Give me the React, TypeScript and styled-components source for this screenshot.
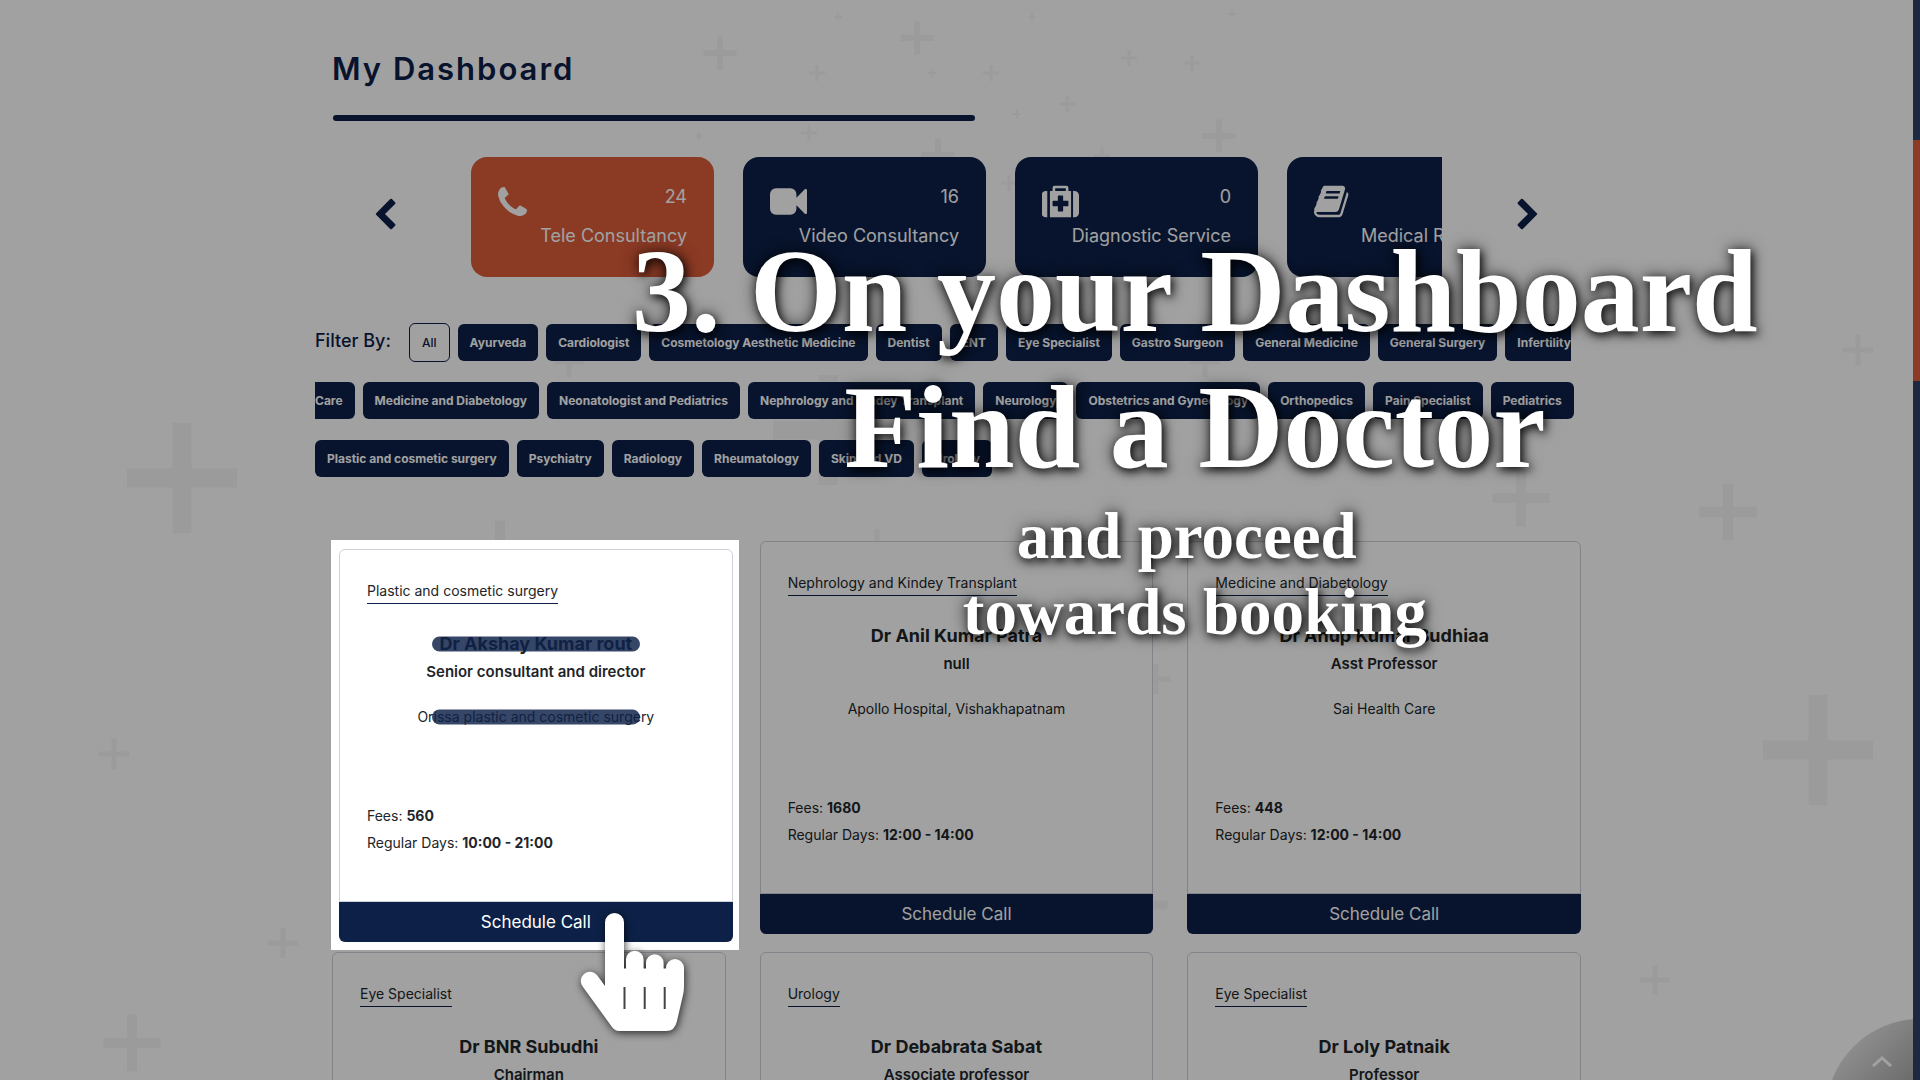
import React from "react";
import styled, { createGlobalStyle, css } from "styled-components";

const navy = "#0d2148";
const orange = "#dc5c39";
const ink = "#212529";

const GlobalStyle = createGlobalStyle`
  *, *::before, *::after { box-sizing: border-box; }
  body {
    margin: 0;
    background: #fff;
    color: ${ink};
    font-family: Inter, "Noto Sans", sans-serif;
    font-size: 14px;
  }
  h1, h2, h3, p { margin: 0; }
  button { font-family: inherit; border: 0; cursor: pointer; }
`;

const Shell = styled.div`
  position: relative;
  display: flex;
  height: 100vh;
  overflow: hidden;
`;

const Content = styled.main`
  position: relative;
  flex: 1;
  min-width: 0;
  overflow: hidden;
`;

const ScrollTrack = styled.div`
  flex: 0 0 7px;
  padding-top: 140px;
  background: #2e4068;
`;

const ScrollThumb = styled.div`
  height: 241px;
  background: ${orange};
`;

const Backdrop = styled.svg`
  position: absolute;
  inset: 0 auto auto 0;
  width: 1920px;
  height: 1080px;
  fill: #f6f6f6;
`;

const Dim = styled.div`
  position: absolute;
  inset: 0;
  z-index: 1;
  background: rgba(0, 0, 0, 0.37);
  pointer-events: none;
`;

const Container = styled.div`
  position: relative;
  width: min(1249px, 92%);
  margin: 0 auto;
  padding-top: 49px;
`;

const Title = styled.h1`
  color: ${navy};
  font-size: 31px;
  font-weight: 600;
  line-height: 40px;
  letter-spacing: 2px;
`;

const TitleBar = styled.div`
  width: 642px;
  max-width: 100%;
  height: 6px;
  margin: 26px 0 36px 1px;
  border-radius: 3px;
  background: ${navy};
`;

const Carousel = styled.section`
  display: flex;
  align-items: center;
  justify-content: space-between;
  padding: 0 36px;
`;

const ArrowButton = styled.button`
  display: flex;
  padding: 0 0 6px;
  background: transparent;
  color: ${navy};
`;

const Viewport = styled.div`
  display: flex;
  flex: 0 1 971px;
  gap: 29px;
  overflow: hidden;
`;

const Tile = styled.button<{ $active?: boolean }>`
  display: flex;
  flex: 0 0 243px;
  justify-content: space-between;
  height: 120px;
  padding: 26px 27px;
  border-radius: 16px;
  background: ${(p) => (p.$active ? orange : navy)};
  color: #fff;
  font-size: 18px;
  white-space: nowrap;
`;

const TileIcon = styled.span`
  display: flex;
  align-items: center;
  width: 37px;
  height: 37px;
`;

const TileText = styled.span`
  display: flex;
  flex: 1;
  flex-direction: column;
  align-items: flex-end;
  width: 0;
  line-height: 39px;
  margin-top: -6px;
`;

const Filters = styled.nav`
  margin: 37px -17px 53px;
  font-size: 12px;
  line-height: 58px;
  white-space: nowrap;
`;

const FilterLabel = styled.span`
  display: inline-block;
  width: 94px;
  color: ${navy};
  font-size: 18px;
  font-weight: 500;
  line-height: 24px;
`;

const Pill = styled.a<{ $outlined?: boolean; $cut?: "left" | "right" }>`
  margin-right: 8px;
  padding: 11px 12px;
  border-radius: 6px;
  background: ${navy};
  color: #fff;
  font-weight: 700;
  text-decoration: none;
  ${(p) =>
    p.$outlined &&
    css`
      border: 1px solid ${navy};
      background: transparent;
      color: ${navy};
      font-weight: 500;
    `}
  ${(p) =>
    p.$cut === "right" &&
    css`
      margin-right: 0;
      padding-right: 0;
      border-radius: 6px 0 0 6px;
    `}
  ${(p) =>
    p.$cut === "left" &&
    css`
      padding-left: 0;
      border-radius: 0 6px 6px 0;
    `}
`;

const Doctors = styled.section`
  display: grid;
  grid-template-columns: repeat(3, minmax(0, 1fr));
  gap: 18px 34px;
`;

const Cell = styled.div`
  position: relative;
  min-width: 0;
`;

const Spotlight = styled.div`
  position: absolute;
  top: -1px;
  left: -1px;
  z-index: 2;
  width: calc(100% + 14px);
  padding: 9px 6px 8px 8px;
  background: #fff;
`;

const Card = styled.article`
  display: flex;
  flex-direction: column;
  min-height: 393px;
  border-radius: 6px;
  background: #fff;
`;

const CardBody = styled.div`
  display: flex;
  flex: 1;
  flex-direction: column;
  align-items: center;
  padding: 31px 27px 45px;
  border: 1px solid #cfd1db;
  border-radius: 6px 6px 0 0;
  line-height: 20px;
`;

const Speciality = styled.p`
  align-self: flex-start;
  padding-bottom: 2px;
  border-bottom: 1px solid ${navy};
`;

const DoctorName = styled.h2`
  margin-top: 28px;
  font-size: 18px;
  font-weight: 700;
  line-height: 24px;
`;

const Position = styled.h3`
  margin-top: 6px;
  font-size: 15px;
  font-weight: 600;
  line-height: 20px;
`;

const Clinic = styled.p`
  margin-top: 25px;
`;

const Covered = styled.span`
  position: relative;
`;

const Redaction = styled.span`
  position: absolute;
  top: 50%;
  left: 50%;
  width: 208px;
  height: 15px;
  border-radius: 8px;
  background: rgba(13, 33, 72, 0.83);
  transform: translate(-50%, -50%);
`;

const Facts = styled.div`
  align-self: stretch;
  margin-top: auto;
  line-height: 27px;
`;

const Schedule = styled.button`
  height: 40px;
  border-radius: 0 0 6px 6px;
  background: ${navy};
  color: #fff;
  font-size: 17px;
`;

const Hand = styled.svg`
  position: absolute;
  top: 373px;
  left: 250px;
  overflow: visible;
  filter: drop-shadow(1px 2px 4px rgba(0, 0, 0, 0.75));
`;

const ToTop = styled.button`
  position: absolute;
  right: -101px;
  bottom: -127px;
  display: flex;
  width: 188px;
  height: 188px;
  padding: 37px 0 0 46px;
  border-radius: 50%;
  background: linear-gradient(135deg, #e8e8e8 10%, #808080 60%);
  color: #fff;
`;

const Caption = styled.div`
  position: absolute;
  top: 224px;
  left: 632px;
  z-index: 3;
  color: #fff;
  font-family: "Liberation Serif", "Times New Roman", serif;
  font-weight: 700;
  text-align: center;
  white-space: nowrap;
  text-shadow: 2px 3px 9px rgba(0, 0, 0, 0.8), 0 0 16px rgba(0, 0, 0, 0.7);
  pointer-events: none;
`;

const CaptionTitle = styled.p`
  font-size: 118px;
  line-height: 136px;
`;

const CaptionNote = styled.p`
  margin-top: 2px;
  font-size: 65px;
  line-height: 76px;
`;

/* centre x, centre y, arm length, arm thickness */
const crosses: number[][] = [
  [182, 478, 110, 19], [114, 754, 30, 5], [283, 943, 30, 5], [132, 1043, 57, 10],
  [1858, 350, 30, 5], [1728, 512, 57, 10], [1818, 750, 110, 19], [1655, 980, 30, 5],
  [720, 53, 33, 6], [917, 38, 33, 6], [817, 73, 16, 3], [991, 73, 16, 3],
  [1129, 58, 16, 3], [1192, 63, 16, 3], [1067, 104, 16, 3], [838, 17, 8, 2],
  [1032, 17, 8, 2], [1232, 14, 8, 2], [932, 73, 8, 2], [1017, 114, 8, 2],
  [699, 136, 8, 2], [809, 133, 16, 3], [938, 155, 33, 6], [1102, 156, 16, 3],
  [1219, 136, 33, 6], [1205, 362, 30, 5], [569, 362, 30, 5], [828, 430, 110, 19],
  [1521, 498, 57, 10], [500, 549, 57, 10], [877, 544, 30, 5], [1156, 679, 30, 5],
  [1139, 905, 57, 9], [1009, 183, 16, 3],
];

const icons = {
  phone: {
    box: "0 0 1408 1408",
    width: 29,
    height: 29,
    d: "M1408 1112q0 27-10 70.5t-21 68.5q-21 50-122 106-94 51-186 51-27 0-53-3.5t-57-12.5-47-14.5-55.5-20.5-49-18q-98-35-175-83-127-79-264-216t-216-264q-48-77-83-175-3-9-18-49t-20.5-55.5-14.5-47-12.5-57-3.5-53q0-92 51-186 56-101 106-122 25-11 68.5-21t70.5-10q14 0 21 3 18 6 53 76 11 19 30 54t35 63.5 31 53.5q3 4 17.5 25t21.5 35.5 7 28.5q0 20-28.5 50t-62 55-62 53-28.5 46q0 9 5 22.5t8.5 20.5 14 24 11.5 19q76 137 174 235t235 174q2 1 19 11.5t24 14 20.5 8.5 22.5 5q18 0 46-28.5t53-62 55-62 50-28.5q14 0 28.5 7t35.5 21.5 25 17.5q25 15 53.5 31t63.5 35 54 30q70 35 76 53 3 7 3 21z",
  },
  video: {
    box: "0 0 1792 1792",
    width: 37,
    height: 37,
    d: "M1792 352v1088q0 42-39 59-13 5-25 5-27 0-45-19l-403-403v166q0 119-84.5 203.5t-203.5 84.5h-704q-119 0-203.5-84.5t-84.5-203.5v-704q0-119 84.5-203.5t203.5-84.5h704q119 0 203.5 84.5t84.5 203.5v165l403-402q18-19 45-19 12 0 25 5 39 17 39 59z",
  },
  medkit: {
    box: "0 0 1792 1792",
    width: 37,
    height: 37,
    d: "M1280 1088v-192q0-14-9-23t-23-9h-224v-224q0-14-9-23t-23-9h-192q-14 0-23 9t-9 23v224h-224q-14 0-23 9t-9 23v192q0 14 9 23t23 9h224v224q0 14 9 23t23 9h192q14 0 23-9t9-23v-224h224q14 0 23-9t9-23zm-640-704h512v-128h-512v128zm-384 0v1280h-64q-92 0-158-66t-66-158v-832q0-92 66-158t158-66h64zm1152 0v1280h-1024v-1280h128v-160q0-40 28-68t68-28h576q40 0 68 28t28 68v160h128zm384 224v832q0 92-66 158t-158 66h-64v-1280h64q92 0 158 66t66 158z",
  },
  book: {
    box: "64 0 1792 1792",
    width: 37,
    height: 37,
    d: "M1703 478q40 57 18 129l-275 906q-19 64-76.5 107.5t-122.5 43.5h-923q-77 0-148.5-53.5t-99.5-131.5q-24-67-2-127 0-4 3-27t4-37q1-8-3-21.5t-3-19.5q2-11 8-21t16.5-23.5 16.5-23.5q23-38 45-91.5t30-91.5q3-10 .5-30t-.5-28q3-11 17-28t17-23q21-36 42-92t25-90q1-9-2.5-32t.5-28q4-13 22-30.5t22-22.5q19-26 42.5-84.5t27.5-96.5q1-8-3-25.5t-2-26.5q2-8 9-18t18-23 17-21q8-12 16.5-30.5t15-35 16-36 19.5-32 26.5-23.5 36-11.5 47.5 5.5l-1 3q38-9 51-9h761q74 0 114 56t18 130l-274 906q-36 119-71.5 153.5t-128.5 34.5h-869q-27 0-38 15-11 16-1 43 24 70 144 70h923q29 0 56-15.5t35-41.5l300-987q7-22 5-57 38 15 59 43zm-1064 2q-4 13 2 22.5t20 9.5h608q13 0 25.5-9.5t16.5-22.5l21-64q4-13-2-22.5t-20-9.5h-608q-13 0-25.5 9.5t-16.5 22.5zm-83 256q-4 13 2 22.5t20 9.5h608q13 0 25.5-9.5t16.5-22.5l21-64q4-13-2-22.5t-20-9.5h-608q-13 0-25.5 9.5t-16.5 22.5z",
  },
};

const chevron =
  "M1427 301l-531 531 531 531q19 19 19 45t-19 45l-166 166q-19 19-45 19t-45-19l-742-742q-19-19-19-45t19-45l742-742q19-19 45-19t45 19l166 166q19 19 19 45t-19 45z";

type IconName = keyof typeof icons;

function Icon({ name }: { name: IconName }) {
  const icon = icons[name];
  return (
    <svg width={icon.width} height={icon.height} viewBox={icon.box} fill="currentColor" aria-hidden="true">
      <path d={icon.d} />
    </svg>
  );
}

function Chevron({ flipped }: { flipped?: boolean }) {
  return (
    <svg width="34" height="34" viewBox="0 0 1792 1792" fill="currentColor" aria-hidden="true">
      <path d={chevron} transform={flipped ? "matrix(-1 0 0 1 1792 64)" : "translate(0 64)"} />
    </svg>
  );
}

const services: { icon: IconName; count?: number; label: string }[] = [
  { icon: "phone", count: 24, label: "Tele Consultancy" },
  { icon: "video", count: 16, label: "Video Consultancy" },
  { icon: "medkit", count: 0, label: "Diagnostic Service" },
  { icon: "book", label: "Medical Records" },
];

const firstRow = [
  "Ayurveda", "Cardiologist", "Cosmetology Aesthetic Medicine", "Dentist", "ENT",
  "Eye Specialist", "Gastro Surgeon", "General Medicine", "General Surgery",
];
const secondRow = [
  "Medicine and Diabetology", "Neonatologist and Pediatrics", "Nephrology and Kindey Transplant",
  "Neurology", "Obstetrics and Gynecology", "Orthopedics", "Pain Specialist", "Pediatrics",
];
const thirdRow = [
  "Plastic and cosmetic surgery", "Psychiatry", "Radiology", "Rheumatology", "Skin and VD", "Urology",
];

interface Doctor {
  speciality: string;
  name: string;
  position: string;
  clinic: string;
  fees: string;
  hours: string;
}

const featured: Doctor = {
  speciality: "Plastic and cosmetic surgery",
  name: "Dr Akshay Kumar rout",
  position: "Senior consultant and director",
  clinic: "Orissa plastic and cosmetic surgery",
  fees: "560",
  hours: "10:00 - 21:00",
};

const doctors: Doctor[] = [
  { speciality: "Nephrology and Kindey Transplant", name: "Dr Anil Kumar Patra", position: "null", clinic: "Apollo Hospital, Vishakhapatnam", fees: "1680", hours: "12:00 - 14:00" },
  { speciality: "Medicine and Diabetology", name: "Dr Anup Kumar Budhiaa", position: "Asst Professor", clinic: "Sai Health Care", fees: "448", hours: "12:00 - 14:00" },
  { speciality: "Eye Specialist", name: "Dr BNR Subudhi", position: "Chairman", clinic: "", fees: "", hours: "" },
  { speciality: "Urology", name: "Dr Debabrata Sabat", position: "Associate professor", clinic: "", fees: "", hours: "" },
  { speciality: "Eye Specialist", name: "Dr Loly Patnaik", position: "Professor", clinic: "", fees: "", hours: "" },
];

function DoctorCard({ doctor, covered }: { doctor: Doctor; covered?: boolean }) {
  return (
    <Card>
      <CardBody>
        <Speciality>{doctor.speciality}</Speciality>
        <DoctorName>
          <Covered>
            {doctor.name}
            {covered && <Redaction />}
          </Covered>
        </DoctorName>
        <Position>{doctor.position}</Position>
        {doctor.clinic && (
          <Clinic>
            <Covered>
              {doctor.clinic}
              {covered && <Redaction />}
            </Covered>
          </Clinic>
        )}
        {doctor.fees && (
          <Facts>
            <p>Fees: <b>{doctor.fees}</b></p>
            <p>Regular Days: <b>{doctor.hours}</b></p>
          </Facts>
        )}
      </CardBody>
      {doctor.fees && <Schedule type="button">Schedule Call</Schedule>}
    </Card>
  );
}

function Pills({ names }: { names: string[] }) {
  return (
    <>
      {names.map((name) => (
        <Pill key={name} href="#doctors">{name}</Pill>
      ))}
    </>
  );
}

export default function App() {
  return (
    <>
      <GlobalStyle />
      <Shell>
        <Content>
          <Backdrop viewBox="0 0 1920 1080" aria-hidden="true">
            {crosses.map(([x, y, size, arm]) => (
              <path
                key={`${x}-${y}`}
                d={`M${x - arm / 2} ${y - size / 2}h${arm}v${(size - arm) / 2}h${(size - arm) / 2}v${arm}h${-(size - arm) / 2}v${(size - arm) / 2}h${-arm}v${-(size - arm) / 2}h${-(size - arm) / 2}v${-arm}h${(size - arm) / 2}z`}
              />
            ))}
          </Backdrop>
          <Container>
            <Title>My Dashboard</Title>
            <TitleBar />
            <Carousel aria-label="Services">
              <ArrowButton type="button" aria-label="Previous"><Chevron /></ArrowButton>
              <Viewport>
                {services.map((service, index) => (
                  <Tile key={service.label} type="button" $active={index === 0}>
                    <TileIcon><Icon name={service.icon} /></TileIcon>
                    <TileText>
                      <span>{service.count ?? "\u00a0"}</span>
                      <span>{service.label}</span>
                    </TileText>
                  </Tile>
                ))}
              </Viewport>
              <ArrowButton type="button" aria-label="Next"><Chevron flipped /></ArrowButton>
            </Carousel>
            <Filters aria-label="Filter by speciality">
              <FilterLabel>Filter By:</FilterLabel>
              <Pill href="#doctors" $outlined>All</Pill>
              <Pills names={firstRow} />
              <Pill href="#doctors" $cut="right">Infertility</Pill>
              <br />
              <Pill href="#doctors" $cut="left">Care</Pill>
              <Pills names={secondRow} />
              <br />
              <Pills names={thirdRow} />
            </Filters>
            <Doctors id="doctors">
              <Cell>
                <Spotlight>
                  <DoctorCard doctor={featured} covered />
                  <Hand width="103" height="118" viewBox="0 0 103 118" aria-hidden="true">
                    <path
                      fill="#fff"
                      d="M24 73V9.5A9.5 9.5 0 0 1 43 9.5V55.6H45V46.5A8.8 8.8 0 0 1 62.6 46.5V55.6H65V50A8.8 8.8 0 0 1 82.6 50V55.6H85V55A9 9 0 0 1 103 55V74Q103 78 102 82L96 108Q94 118 85 118H38Q34 118 31 114L2 74A9 9 0 0 1 16 62Z"
                    />
                    <path stroke="#444" strokeWidth="2" d="M43.5 74V96M63.7 74V96M83.7 74V96" />
                  </Hand>
                </Spotlight>
              </Cell>
              {doctors.map((doctor) => (
                <Cell key={doctor.name}><DoctorCard doctor={doctor} /></Cell>
              ))}
            </Doctors>
          </Container>
          <ToTop type="button" aria-label="Back to top">
            <svg width="20" height="11" viewBox="0 0 20 11" fill="none" stroke="currentColor" strokeWidth="3" aria-hidden="true">
              <path d="M1 10L10 2L19 10" />
            </svg>
          </ToTop>
        </Content>
        <ScrollTrack aria-hidden="true"><ScrollThumb /></ScrollTrack>
        <Dim />
        <Caption>
          <CaptionTitle>3. On your Dashboard</CaptionTitle>
          <CaptionTitle>Find a Doctor</CaptionTitle>
          <CaptionNote>and proceed{"\u00a0"}<br />towards booking</CaptionNote>
        </Caption>
      </Shell>
    </>
  );
}
